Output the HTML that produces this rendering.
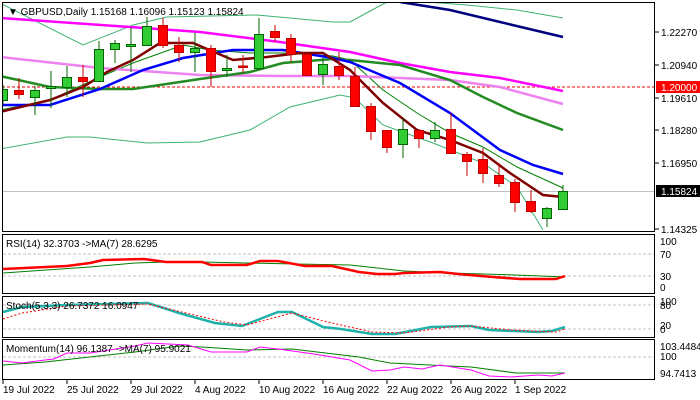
<!DOCTYPE html>
<html><head><meta charset="utf-8"><style>
html,body{margin:0;padding:0;background:#fff;width:700px;height:400px;overflow:hidden}
svg{display:block;font-family:"Liberation Sans",sans-serif}
text{font-size:10px;fill:#000}
</style></head><body>
<svg width="700" height="400" viewBox="0 0 700 400" xmlns="http://www.w3.org/2000/svg">
<defs><clipPath id="cm"><rect x="2.5" y="2.5" width="652" height="229"/></clipPath></defs>
<g clip-path="url(#cm)">
<line x1="2" y1="87" x2="655" y2="87" stroke="#e00" stroke-dasharray="3,2"/>
<line x1="2" y1="191.5" x2="655" y2="191.5" stroke="#c0c0c0"/>
<!-- bollinger -->
<polyline fill="none" stroke="#3cb371" stroke-width="1" points="0,3 83,45 133,25 167,17 257,15 333,22 350,22 385,3 400,0 467,5 517,10 563,18"/>
<polyline fill="none" stroke="#3cb371" stroke-width="1" points="0,149 67,137 90,137 147,143 200,142 250,130 290,107 340,95 350,97 360,103 383,125 433,143 483,163 517,187 543,230"/>
<polyline fill="none" stroke="#008000" stroke-width="1" points="0,110 50,100 100,77 133,63 183,45 210,50 250,53 283,53 333,56 350,60 383,90 417,113 450,133 483,147 517,167 563,188"/>
<polyline fill="none" stroke="#000080" stroke-width="2.5" points="400,2 450,10 500,22 563,37"/>
<polyline fill="none" stroke="#ee82ee" stroke-width="2.5" points="0,57 100,68 200,75 280,76 350,76 400,78 450,80 500,87 563,104"/>
<polyline fill="none" stroke="#ff00ff" stroke-width="2.5" points="0,18 130,27 200,32 280,42 350,52 400,63 450,72 500,78 563,91"/>
<polyline fill="none" stroke="#228b22" stroke-width="2.5" points="0,76 50,87 100,89 133,89 200,79 250,72 283,63 333,59 350,60 400,65 450,80 483,97 517,113 563,130"/>
<polyline fill="none" stroke="#0000ff" stroke-width="2.5" points="0,105 50,105 100,89 143,70 183,58 233,50 283,50 333,58 350,62 400,83 450,113 500,150 533,165 563,174"/>
<polyline fill="none" stroke="#800000" stroke-width="2.5" points="0,112 50,100 83,87 107,72 133,60 160,43 193,43 233,60 267,57 300,53 323,53 350,70 383,103 417,130 450,140 483,153 510,173 543,195 563,197"/>
<!-- candles -->
<g stroke-width="1">
<g stroke="#006400" fill="#32cd32">
<line x1="3" y1="85" x2="3" y2="104"/><rect x="-1.5" y="89.5" width="9" height="11"/>
<line x1="35" y1="86" x2="35" y2="115"/><rect x="30.5" y="90.5" width="9" height="7"/>
<line x1="51" y1="71" x2="51" y2="108"/><rect x="46.5" y="86.5" width="9" height="2"/>
<line x1="67" y1="66" x2="67" y2="97"/><rect x="62.5" y="77.5" width="9" height="10"/>
<line x1="99" y1="41" x2="99" y2="81"/><rect x="94.5" y="49.5" width="9" height="32"/>
<line x1="115" y1="40" x2="115" y2="63"/><rect x="110.5" y="43.5" width="9" height="6"/>
<line x1="131" y1="27" x2="131" y2="72"/><rect x="126.5" y="44.5" width="9" height="2"/>
<line x1="147" y1="17" x2="147" y2="45"/><rect x="142.5" y="26.5" width="9" height="19"/>
<line x1="195" y1="33" x2="195" y2="72"/><rect x="190.5" y="48.5" width="9" height="4"/>
<line x1="227" y1="55" x2="227" y2="77"/><rect x="222.5" y="68.5" width="9" height="2"/>
<line x1="259" y1="18" x2="259" y2="70"/><rect x="254.5" y="34.5" width="9" height="34"/>
<line x1="323" y1="58" x2="323" y2="85"/><rect x="318.5" y="64.5" width="9" height="10"/>
<line x1="403" y1="118" x2="403" y2="158"/><rect x="398.5" y="129.5" width="9" height="15"/>
<line x1="435" y1="122" x2="435" y2="142"/><rect x="430.5" y="130.5" width="9" height="8"/>
<line x1="547" y1="207" x2="547" y2="227"/><rect x="542.5" y="208.5" width="9" height="10"/>
<line x1="563" y1="185" x2="563" y2="210"/><rect x="558.5" y="191.5" width="9" height="18"/>
</g>
<g stroke="#c00000" fill="#ff0000">
<line x1="19" y1="78" x2="19" y2="99"/><rect x="14.5" y="90.5" width="9" height="4"/>
<line x1="83" y1="65" x2="83" y2="97"/><rect x="78.5" y="77.5" width="9" height="4"/>
<line x1="163" y1="18" x2="163" y2="48"/><rect x="158.5" y="25.5" width="9" height="20"/>
<line x1="179" y1="37" x2="179" y2="62"/><rect x="174.5" y="45.5" width="9" height="7"/>
<line x1="211" y1="45" x2="211" y2="87"/><rect x="206.5" y="48.5" width="9" height="23"/>
<line x1="243" y1="55" x2="243" y2="73"/><rect x="238.5" y="66" width="9" height="1.5"/>
<line x1="275" y1="25" x2="275" y2="42"/><rect x="270.5" y="31.5" width="9" height="6"/>
<line x1="291" y1="34" x2="291" y2="62"/><rect x="286.5" y="38.5" width="9" height="16"/>
<line x1="307" y1="52" x2="307" y2="75"/><rect x="302.5" y="54.5" width="9" height="21"/>
<line x1="339" y1="52" x2="339" y2="80"/><rect x="334.5" y="66.5" width="9" height="9"/>
<line x1="355" y1="67" x2="355" y2="107"/><rect x="350.5" y="76.5" width="9" height="30"/>
<line x1="371" y1="103" x2="371" y2="140"/><rect x="366.5" y="106.5" width="9" height="25"/>
<line x1="387" y1="130" x2="387" y2="153"/><rect x="382.5" y="130.5" width="9" height="17"/>
<line x1="419" y1="130" x2="419" y2="148"/><rect x="414.5" y="130.5" width="9" height="8"/>
<line x1="451" y1="113" x2="451" y2="153"/><rect x="446.5" y="129.5" width="9" height="24"/>
<line x1="467" y1="152" x2="467" y2="176"/><rect x="462.5" y="154.5" width="9" height="7"/>
<line x1="483" y1="148" x2="483" y2="183"/><rect x="478.5" y="159.5" width="9" height="14"/>
<line x1="499" y1="163" x2="499" y2="187"/><rect x="494.5" y="175.5" width="9" height="8"/>
<line x1="515" y1="179" x2="515" y2="212"/><rect x="510.5" y="182.5" width="9" height="20"/>
<line x1="531" y1="190" x2="531" y2="213"/><rect x="526.5" y="201.5" width="9" height="10"/>
</g></g>
</g>
<text x="8" y="15" font-size="11">▼ GBPUSD,Daily  1.15168 1.16096 1.15123 1.15824</text>
<rect x="2.5" y="2.5" width="652" height="229" fill="none" stroke="#000"/>
<g stroke="#000">
<line x1="655" y1="32" x2="659" y2="32"/><line x1="655" y1="65" x2="659" y2="65"/><line x1="655" y1="98" x2="659" y2="98"/><line x1="655" y1="130" x2="659" y2="130"/><line x1="655" y1="163" x2="659" y2="163"/><line x1="655" y1="229" x2="659" y2="229"/>
</g>
<text x="661" y="36">1.22270</text>
<text x="661" y="69">1.20940</text>
<text x="661" y="102">1.19610</text>
<text x="661" y="134">1.18280</text>
<text x="661" y="167">1.16950</text>
<text x="661" y="233">1.14325</text>
<rect x="656" y="81" width="44" height="12" fill="#ff0000"/><text x="661" y="91" fill="#fff" style="fill:#fff">1.20000</text>
<rect x="656" y="185" width="44" height="12" fill="#000"/><text x="661" y="195" style="fill:#fff">1.15824</text>

<!-- RSI -->
<rect x="2.5" y="234.5" width="652" height="59" fill="none" stroke="#000"/>
<line x1="3" y1="254" x2="654" y2="254" stroke="#c0c0c0" stroke-dasharray="3,2"/>
<line x1="3" y1="276" x2="654" y2="276" stroke="#c0c0c0" stroke-dasharray="3,2"/>
<polyline fill="none" stroke="#008000" points="3,273 90,267 135,263 166,262 202,262 247,263 296,264 350,265 404,271 449,273 516,275 565,277"/>
<polyline fill="none" stroke="#ff0000" stroke-width="2.5" points="3,269 67,266 90,263 103,260 144,259 166,262 202,262 211,265 247,265 260,261 278,261 305,266 332,266 359,272 377,274 395,274 404,273 440,272 458,274 493,277 520,279 556,279 565,276"/>
<text x="6" y="247">RSI(14) 32.3703  -&gt;MA(7) 28.6295</text>
<text x="660" y="245">100</text><text x="660" y="258">70</text><text x="660" y="280">30</text><text x="660" y="291">0</text>

<!-- Stoch -->
<rect x="2.5" y="296.5" width="652" height="41" fill="none" stroke="#000"/>
<line x1="3" y1="305" x2="654" y2="305" stroke="#c0c0c0" stroke-dasharray="3,2"/>
<line x1="3" y1="329" x2="654" y2="329" stroke="#c0c0c0" stroke-dasharray="3,2"/>
<polyline fill="none" stroke="#20b2aa" stroke-width="2.5" points="3,312 22,307 67,305 148,303 179,313 215,323 242,326 278,312 292,312 323,327 341,329 372,334 395,334 431,327 471,326 489,330 538,332 552,331 565,327"/>
<polyline fill="none" stroke="#ff0000" stroke-dasharray="2,2" points="3,319 22,313 67,306 148,304 224,322 247,325 292,313 332,323 372,332 404,333 449,327 471,326 511,330 556,332 565,329"/>
<text x="6" y="309">Stoch(5,3,3) 26.7372 16.0947</text>
<text x="660" y="305">100</text><text x="660" y="309">80</text><text x="660" y="329">20</text><text x="660" y="333">0</text>

<!-- Momentum -->
<rect x="2.5" y="339.5" width="652" height="40" fill="none" stroke="#000"/>
<line x1="3" y1="357" x2="654" y2="357" stroke="#c0c0c0" stroke-dasharray="3,2"/>
<polyline fill="none" stroke="#008000" points="3,365 45,362 135,352 179,346 202,347 247,350 292,349 359,357 390,363 449,366 471,367 516,373 565,373"/>
<polyline fill="none" stroke="#ff00ff" points="3,361 22,363 45,360 54,359 67,353 90,353 135,346 148,343 188,345 211,352 247,352 260,347 278,349 314,354 350,360 372,371 390,370 404,367 422,369 440,365 471,370 489,376 511,377 538,375 552,376 565,373"/>
<text x="6" y="352">Momentum(14) 96.1387  -&gt;MA(7) 95.9021</text>
<text x="660" y="350">103.4484</text><text x="660" y="360">100</text><text x="660" y="377">94.7413</text>

<!-- dates -->
<g stroke="#000">
<line x1="3" y1="380" x2="3" y2="384"/><line x1="67" y1="380" x2="67" y2="384"/><line x1="131" y1="380" x2="131" y2="384"/><line x1="195" y1="380" x2="195" y2="384"/><line x1="259" y1="380" x2="259" y2="384"/><line x1="323" y1="380" x2="323" y2="384"/><line x1="387" y1="380" x2="387" y2="384"/><line x1="451" y1="380" x2="451" y2="384"/><line x1="515" y1="380" x2="515" y2="384"/>
</g>
<text x="3" y="393">19 Jul 2022</text>
<text x="67" y="393">25 Jul 2022</text>
<text x="131" y="393">29 Jul 2022</text>
<text x="195" y="393">4 Aug 2022</text>
<text x="259" y="393">10 Aug 2022</text>
<text x="323" y="393">16 Aug 2022</text>
<text x="387" y="393">22 Aug 2022</text>
<text x="451" y="393">26 Aug 2022</text>
<text x="515" y="393">1 Sep 2022</text>
</svg>
</body></html>
